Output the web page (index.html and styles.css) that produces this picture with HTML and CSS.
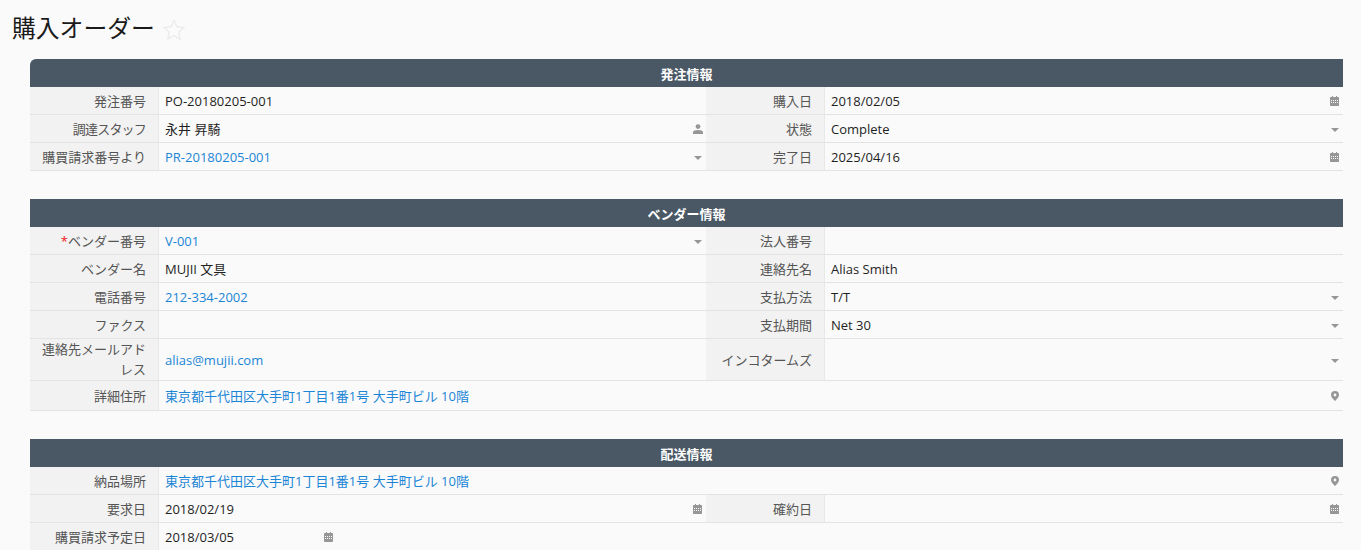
FILE: index.html
```html
<!DOCTYPE html>
<html lang="ja">
<head>
<meta charset="utf-8">
<title>購入オーダー</title>
<link rel="stylesheet" href="styles.css">
</head>
<body>
<svg class="defs" width="0" height="0" aria-hidden="true">
  <symbol id="cal" viewBox="0 0 9 10"><path fill-rule="evenodd" d="M2 0h1v1h3V0h1v1h1.200c.5 0 .8.3.8.8v7.400c0 .5-.3.8-.8.8H.8C.3 10 0 9.700 0 9.200V1.800C0 1.300.3 1 .8 1H2zM1 4v1h1V4zm2 0v1h1V4zm2 0v1h1V4zm2 0v1h1V4zM1 6v1h1V6zm2 0v1h1V6zm2 0v1h1V6zm2 0v1h1V6z"/></symbol>
  <symbol id="caret" viewBox="0 0 8 4"><path d="M0 0h8L4 4z"/></symbol>
  <symbol id="user" viewBox="0 0 10 10"><circle cx="5" cy="2.600" r="2.400"/><path d="M0 10V8.300C0 6.900 2 6 5 6s5 .9 5 2.300V10z"/></symbol>
  <symbol id="pin" viewBox="0 0 8 10"><path fill-rule="evenodd" d="M4 0a4 4 0 0 1 4 4c0 2.300-2.500 4.500-4 6C2.500 8.500 0 6.300 0 4a4 4 0 0 1 4-4zm0 2.600a1.400 1.400 0 1 0 0 2.800 1.400 1.400 0 0 0 0-2.800z"/></symbol>
</svg>

<header class="page-head">
  <h1 class="page-title">購入オーダー</h1>
  <svg class="star" viewBox="0 0 24 24" width="24" height="24"><path d="M12 2.500l2.900 6.300 6.900.8-5.100 4.700 1.400 6.800-6.100-3.400-6.100 3.400 1.400-6.800-5.100-4.700 6.900-.8z"/></svg>
</header>

<section class="panel">
  <h2 class="panel-title panel-title-first">発注情報</h2>
  <div class="form-grid">
    <div class="label">発注番号</div>
    <div class="value">PO-20180205-001</div>
    <div class="label">購入日</div>
    <div class="value">2018/02/05<svg class="icon i-cal"><use href="#cal"/></svg></div>

    <div class="label"><span class="tight">調達スタッフ</span></div>
    <div class="value">永井 昇騎<svg class="icon i-user"><use href="#user"/></svg></div>
    <div class="label">状態</div>
    <div class="value">Complete<svg class="icon i-caret"><use href="#caret"/></svg></div>

    <div class="label">購買請求番号より</div>
    <div class="value link">PR-20180205-001<svg class="icon i-caret"><use href="#caret"/></svg></div>
    <div class="label">完了日</div>
    <div class="value">2025/04/16<svg class="icon i-cal"><use href="#cal"/></svg></div>
  </div>
</section>

<section class="panel">
  <h2 class="panel-title">ベンダー情報</h2>
  <div class="form-grid">
    <div class="label"><span class="req">*</span>ベンダー番号</div>
    <div class="value link">V-001<svg class="icon i-caret"><use href="#caret"/></svg></div>
    <div class="label">法人番号</div>
    <div class="value"></div>

    <div class="label">ベンダー名</div>
    <div class="value">MUJII 文具</div>
    <div class="label">連絡先名</div>
    <div class="value">Alias Smith</div>

    <div class="label">電話番号</div>
    <div class="value link">212-334-2002</div>
    <div class="label">支払方法</div>
    <div class="value">T/T<svg class="icon i-caret"><use href="#caret"/></svg></div>

    <div class="label">ファクス</div>
    <div class="value"></div>
    <div class="label">支払期間</div>
    <div class="value">Net 30<svg class="icon i-caret"><use href="#caret"/></svg></div>

    <div class="label label-multi">連絡先メールアドレス</div>
    <div class="value link">alias@mujii.com</div>
    <div class="label">インコタームズ</div>
    <div class="value"><svg class="icon i-caret"><use href="#caret"/></svg></div>

    <div class="label label-tall">詳細住所</div>
    <div class="value link wide">東京都千代田区大手町1丁目1番1号 大手町ビル 10階<svg class="icon i-pin"><use href="#pin"/></svg></div>
  </div>
</section>

<section class="panel panel-last">
  <h2 class="panel-title">配送情報</h2>
  <div class="form-grid">
    <div class="label">納品場所</div>
    <div class="value link wide">東京都千代田区大手町1丁目1番1号 大手町ビル 10階<svg class="icon i-pin"><use href="#pin"/></svg></div>

    <div class="label">要求日</div>
    <div class="value">2018/02/19<svg class="icon i-cal"><use href="#cal"/></svg></div>
    <div class="label">確約日</div>
    <div class="value"><svg class="icon i-cal"><use href="#cal"/></svg></div>

    <div class="label label-last">購買請求予定日</div>
    <div class="value value-last"><span class="narrow">2018/03/05<svg class="icon i-cal"><use href="#cal"/></svg></span></div>
  </div>
</section>
</body>
</html>
```

FILE: styles.css
```css
* { box-sizing: border-box; }

html, body {
  margin: 0;
  height: 550px;
  overflow: hidden;
}

body {
  background: #fafafa;
  color: #1f1f1f;
  font-family: "Open Sans", "Noto Sans CJK JP", sans-serif;
  font-size: 13px;
  line-height: 18px;
}

.defs { display: block; height: 0; }

.page-head {
  display: flex;
  align-items: center;
  gap: 7px;
  height: 59px;
  padding: 0 0 0 12px;
}

.page-title {
  margin: 0;
  font-size: 23.800px;
  font-weight: 400;
  line-height: 32px;
  color: #1a1a1a;
  position: relative;
  top: -2px;
}

.star {
  fill: #fbfbfb;
  stroke: #ececec;
  stroke-width: 1.500;
}

.panel {
  margin: 0 18px 28px 30px;
}

.panel-last { margin-bottom: 0; }

.panel-title {
  margin: 0;
  height: 28px;
  background: #4a5866;
  color: #fff;
  font-size: 13px;
  font-weight: 700;
  line-height: 30px;
  text-align: center;
}

.panel-title-first { border-radius: 6px 0 0 0; }

.form-grid {
  display: grid;
  grid-template-columns: 129px 547px 119px 518px;
}

.label, .value {
  min-height: 28px;
  border-bottom: 1px solid #e3e3e3;
  display: flex;
  align-items: center;
}

.label {
  background: #f2f2f2;
  border-right: 1px solid #e8e8e8;
  justify-content: flex-end;
  padding: 0 12px 0 8px;
  color: #555;
  text-align: right;
}

.tight { letter-spacing: -0.800px; }

.label-multi { min-height: 42px; line-height: 20px; padding-bottom: 1px; }

.label-tall { min-height: 30px; }

.label-last, .value-last { min-height: 27px; border-bottom: 0; }

.value {
  position: relative;
  padding: 0 24px 0 6px;
  background: #fafafa;
}

.link { color: #1b85d6; }

.wide { grid-column: 2 / 5; }

.req { color: #f01420; }

.value-last { padding-right: 0; }

.narrow {
  position: relative;
  display: block;
  width: 172px;
}

.icon {
  position: absolute;
  fill: #969696;
  top: 50%;
}

.i-cal { width: 9px; height: 10px; right: 4px; margin-top: -5px; }
.i-caret { width: 8px; height: 4px; right: 4px; margin-top: -1px; }
.i-user { width: 10px; height: 10px; right: 3px; margin-top: -5px; }
.i-pin { width: 8px; height: 10px; right: 4px; margin-top: -5px; }
```
